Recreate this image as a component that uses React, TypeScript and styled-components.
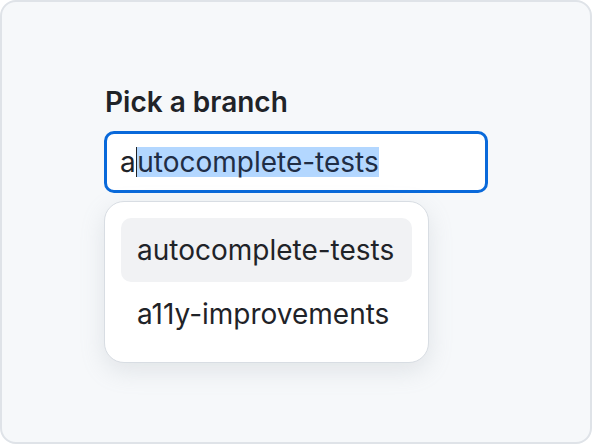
import React from "react";
import styled, { createGlobalStyle } from "styled-components";

const Global = createGlobalStyle`
  html, body { margin: 0; padding: 0; background: #ffffff; }
  body { font-family: Inter, "Noto Sans", sans-serif; }
  * { box-sizing: border-box; }
`;

const Frame = styled.div`
  width: 592px;
  height: 444px;
  border: 2px solid #dfe3e8;
  border-radius: 16px;
  background: #f6f8fa;
  padding: 83px 0 0 102px;
`;

const Field = styled.div`
  display: flex;
  flex-direction: column;
  width: 384px;
`;

const Label = styled.label`
  font-size: 28px;
  font-weight: 600;
  color: #1f2328;
  line-height: 34px;
  margin-bottom: 12px;
  padding-left: 1px;
`;

const Input = styled.div`
  height: 62px;
  border: 3px solid #0969da;
  border-radius: 10px;
  background: #ffffff;
  display: flex;
  align-items: center;
  padding-left: 13px;
  font-size: 28px;
  color: #1f2328;
`;

const Caret = styled.span`
  display: inline-block;
  width: 1.5px;
  height: 30px;
  background: #1f2328;
`;

const Selected = styled.span`
  display: inline-block;
  background: #b3d7ff;
  line-height: 30px;
  height: 30px;
  color: #1f2d45;
`;

const Menu = styled.ul`
  list-style: none;
  margin: 8px 0 0;
  width: 325px;
  padding: 16px;
  background: #ffffff;
  border: 1px solid #d8dde3;
  border-radius: 20px;
  box-shadow: 0 8px 24px rgba(140, 149, 159, 0.2);
`;

const Item = styled.li<{ $active?: boolean }>`
  height: 64px;
  display: flex;
  align-items: center;
  padding-left: 16px;
  border-radius: 10px;
  font-size: 28px;
  color: #1f2328;
  background: ${(p) => (p.$active ? "#f1f2f4" : "transparent")};
`;

export default function App() {
  return (
    <>
      <Global />
      <Frame>
        <Field>
          <Label>Pick a branch</Label>
          <Input>
            <span>a</span>
            <Caret />
            <Selected>utocomplete-tests</Selected>
          </Input>
          <Menu>
            <Item $active>autocomplete-tests</Item>
            <Item>a11y-improvements</Item>
          </Menu>
        </Field>
      </Frame>
    </>
  );
}
